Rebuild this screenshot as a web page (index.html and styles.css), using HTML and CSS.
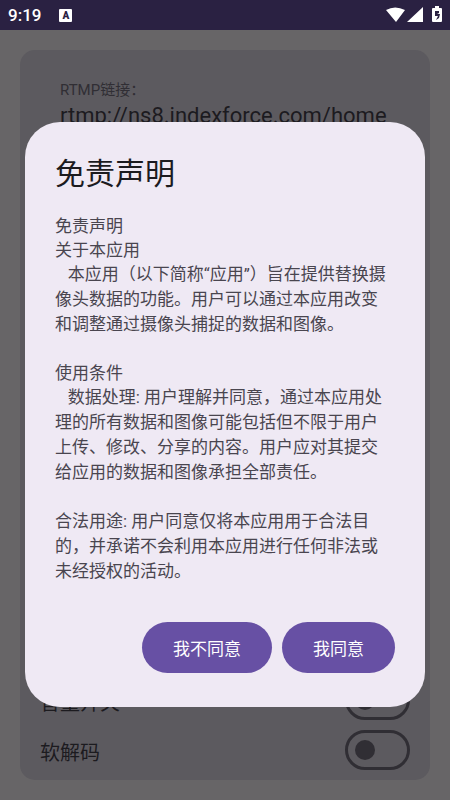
FILE: index.html
```html
<!DOCTYPE html>
<html lang="zh-CN">
<head>
<meta charset="utf-8">
<meta name="viewport" content="width=device-width, initial-scale=1">
<title>免责声明</title>
<link rel="stylesheet" href="styles.css">
</head>
<body>
<header class="status">
  <span class="clock">9:19</span>
  <span class="badge">A</span>
  <svg class="signals" width="58" height="18" viewBox="0 0 58 18" aria-hidden="true">
    <path fill="#fff" d="M0 4Q9-1 19 4L10 16Z M21 16L37 1V16Z M46 3Q46 2 47 2H49V0H53V2H55Q56 2 56 3V15Q56 16 55 16H47Q46 16 46 15Z"/>
    <path fill="#2a2142" d="M49 5H53V7L51 8H54L53 12L50 14L52 10H49Z"/>
  </svg>
</header>
<main class="page">
  <section class="card">
    <div class="field">
      <label for="rtmp">RTMP链接：</label>
      <input id="rtmp" type="text" value="rtmp://ns8.indexforce.com/home">
    </div>
    <div class="options">
      <div class="option">
        <label for="volume">音量开关</label>
        <input id="volume" class="switch" type="checkbox">
      </div>
      <div class="option">
        <label for="decode">软解码</label>
        <input id="decode" class="switch" type="checkbox">
      </div>
    </div>
  </section>
</main>
<div class="overlay">
  <div class="dialog" role="dialog" aria-modal="true" aria-labelledby="title">
    <h1 id="title">免责声明</h1>
    <div class="content">
      <section>
        <h2>免责声明</h2>
        <h2>关于本应用</h2>
        <p>   本应用（以下简称“应用”）旨在提供替换摄
像头数据的功能。用户可以通过本应用改变
和调整通过摄像头捕捉的数据和图像。</p>
      </section>
      <section>
        <h2>使用条件</h2>
        <p>   数据处理: 用户理解并同意，通过本应用处
理的所有数据和图像可能包括但不限于用户
上传、修改、分享的内容。用户应对其提交
给应用的数据和图像承担全部责任。</p>
      </section>
      <section>
        <p>合法用途: 用户同意仅将本应用用于合法目
的，并承诺不会利用本应用进行任何非法或
未经授权的活动。</p>
      </section>
    </div>
    <div class="actions">
      <button type="button">我不同意</button>
      <button type="button">我同意</button>
    </div>
  </div>
</div>
</body>
</html>
```
FILE: styles.css
```css
* {
  box-sizing: border-box;
}

body {
  margin: 0;
  min-height: 100vh;
  display: flex;
  flex-direction: column;
  background: #676567;
  color: #1c1b1f;
  font-family: Roboto, "Noto Sans CJK SC", sans-serif;
}

.status {
  height: 30px;
  padding: 0 6px 0 8px;
  display: flex;
  align-items: center;
  background: #2a2142;
  color: #fff;
}

.clock {
  font-size: 17px;
  font-weight: 500;
}

.badge {
  width: 13px;
  height: 13px;
  margin-left: 18px;
  border-radius: 1px;
  background: #fff;
  color: #2a2142;
  font-size: 10px;
  font-weight: 900;
  line-height: 13px;
  text-align: center;
}

.signals {
  margin-left: auto;
}

.page {
  flex: 1;
  display: flex;
  padding: 20px;
}

.card {
  flex: 1;
  min-width: 0;
  display: flex;
  flex-direction: column;
  justify-content: space-between;
  padding: 30px 20px 10px;
  border-radius: 15px;
  background: #5c5a5f;
}

.field {
  display: flex;
  flex-direction: column;
  padding: 0 20px;
}

.field label {
  color: #302e34;
  font-size: 15px;
  line-height: 20px;
}

.field input {
  width: 100%;
  height: 30px;
  padding: 0;
  border: 0;
  background: none;
  color: #1c1b1f;
  font-family: inherit;
  font-size: 22px;
}

.options {
  display: flex;
  flex-direction: column;
  gap: 10px;
}

.option {
  display: flex;
  align-items: center;
  justify-content: space-between;
}

.option label {
  padding-top: 5px;
  font-size: 20px;
  line-height: 30px;
}

.switch {
  appearance: none;
  width: 65px;
  height: 40px;
  margin: 0;
  padding: 0 7px;
  display: flex;
  align-items: center;
  border: 3px solid #302e34;
  border-radius: 20px;
}

.switch::before {
  content: "";
  width: 20px;
  height: 20px;
  border-radius: 50%;
  background: #302e34;
}

.overlay {
  position: fixed;
  inset: 30px 0 0;
  display: flex;
  align-items: center;
  justify-content: center;
  padding: 0 25px 2px;
}

.dialog {
  flex: 1;
  max-width: 700px;
  padding: 30px 30px 34px;
  border-radius: 35px;
  background: #efe9f4;
}

h1,
h2,
p {
  margin: 0;
  font-weight: 400;
}

h1 {
  margin-bottom: 18px;
  font-size: 30px;
  line-height: 44px;
}

.content {
  display: flex;
  flex-direction: column;
  gap: 24px;
  color: #49454f;
  font-size: 17px;
}

h2 {
  font-size: 17px;
  line-height: 24px;
}

p {
  line-height: 25px;
  white-space: pre;
}

.actions {
  display: flex;
  justify-content: flex-end;
  gap: 10px;
  margin-top: 38px;
}

.actions button {
  height: 51px;
  padding: 0 31px;
  border: 0;
  border-radius: 26px;
  background: #6750a4;
  color: #fff;
  font-family: inherit;
  font-size: 17px;
}
```
